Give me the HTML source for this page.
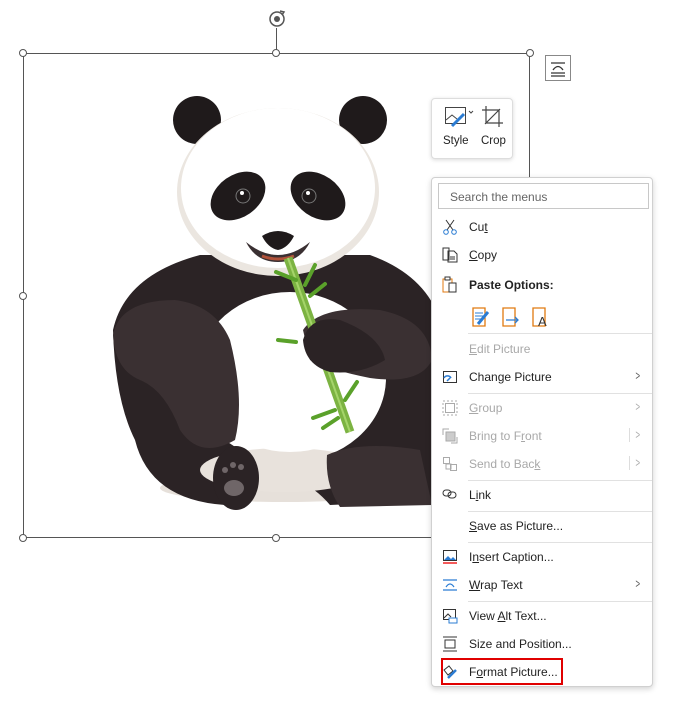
<!DOCTYPE html>
<html><head><meta charset="utf-8"><style>
body{margin:0;width:678px;height:701px;background:#fff;position:relative;overflow:hidden;font-family:"Liberation Sans",sans-serif;}
.h{position:absolute;width:8px;height:8px;border:1px solid #555;border-radius:50%;background:#fff;box-sizing:border-box}
.menu{position:absolute;left:431px;top:177px;width:222px;height:510px;background:#fff;border:1px solid #d0d0d0;border-radius:4px;box-shadow:0 2px 6px rgba(0,0,0,.18);box-sizing:border-box}
.it{position:absolute;left:37px;font-size:12px;color:#222;line-height:14px}
.dis{color:#a8a8a8}
.sep{position:absolute;left:36px;right:0;height:1px;background:#e1e1e1}
.chev{position:absolute;right:10px;font-size:13px;color:#555;transform:scaleX(.6)}
.ic{position:absolute;left:10px}
</style></head><body>
<!-- panda -->
<svg style="position:absolute;left:0;top:0" width="678" height="701" viewBox="0 0 678 701">
<ellipse cx="285" cy="488" rx="125" ry="14" fill="#e6e0da"/>
<path d="M113 330 Q125 275 200 255 L370 255 Q425 275 440 320 L440 500 L330 505 Q300 470 250 470 L225 505 Q150 500 135 440 Q115 400 113 330Z" fill="#2b2325"/>
<ellipse cx="290" cy="378" rx="96" ry="84" fill="#fff"/>
<ellipse cx="285" cy="470" rx="85" ry="22" fill="#e8e2dc"/>
<ellipse cx="290" cy="372" rx="92" ry="80" fill="#fff"/>
<path d="M113 335 Q120 300 175 300 Q215 305 230 340 Q245 400 235 440 Q200 460 180 430 Q165 390 140 380 Q115 370 113 335Z" fill="#3a3032"/>
<path d="M303 330 Q320 305 380 310 Q430 320 432 360 Q420 385 370 378 Q330 370 310 360Z" fill="#3a3032"/>
<path d="M327 455 Q360 440 420 450 L432 505 L340 507 Q325 485 327 455Z" fill="#3a3032"/>
<ellipse cx="236" cy="478" rx="23" ry="32" fill="#2b2325"/>
<ellipse cx="234" cy="488" rx="10" ry="8" fill="#6f6668"/>
<circle cx="225" cy="470" r="3" fill="#6f6668"/><circle cx="233" cy="465" r="3" fill="#6f6668"/><circle cx="241" cy="467" r="3" fill="#6f6668"/>
<circle cx="197" cy="120" r="24" fill="#1f1a1b"/><circle cx="363" cy="120" r="24" fill="#1f1a1b"/>
<ellipse cx="278" cy="192" rx="101" ry="84" fill="#ebe6e0"/>
<ellipse cx="278" cy="188" rx="97" ry="80" fill="#fff"/>
<ellipse cx="238" cy="196" rx="30" ry="21" fill="#1f1a1b" transform="rotate(-35 238 196)"/>
<ellipse cx="318" cy="196" rx="30" ry="21" fill="#1f1a1b" transform="rotate(35 318 196)"/>
<circle cx="243" cy="196" r="7" fill="none" stroke="#777" stroke-width="1"/><circle cx="242" cy="193" r="2" fill="#fff"/>
<circle cx="309" cy="196" r="7" fill="none" stroke="#777" stroke-width="1"/><circle cx="308" cy="193" r="2" fill="#fff"/>
<path d="M262 236 Q278 226 294 236 Q288 248 278 250 Q268 248 262 236Z" fill="#1f1a1b"/>
<path d="M246 242 Q278 268 310 242 Q300 262 278 262 Q256 262 246 242Z" fill="#3a3032"/>
<path d="M262 256 Q278 262 294 256" stroke="#b0523a" stroke-width="3" fill="none"/>
<path d="M288 258 L350 432" stroke="#7cb342" stroke-width="9"/>
<path d="M288 258 L350 432" stroke="#a5d46a" stroke-width="2"/>
<path d="M296 280l-20-8M305 285l10-20M310 296l15-12M296 342l-18-2M345 400l12-18M335 410l-22 8M338 418l-15 10" stroke="#5aa12a" stroke-width="4" stroke-linecap="round"/>
<path d="M303 340 Q310 315 340 320 Q380 335 385 360 Q360 375 330 372 Q305 365 303 340Z" fill="#2b2325"/>
</svg>
<!-- selection frame -->
<div style="position:absolute;left:23px;top:53px;width:507px;height:485px;border:1px solid #555;box-sizing:border-box"></div>
<div style="position:absolute;left:276px;top:28px;width:1px;height:25px;background:#555"></div>
<div class="h" style="left:19px;top:49px"></div><div class="h" style="left:272px;top:49px"></div><div class="h" style="left:526px;top:49px"></div>
<div class="h" style="left:19px;top:292px"></div>
<div class="h" style="left:19px;top:534px"></div><div class="h" style="left:272px;top:534px"></div>
<svg style="position:absolute;left:267px;top:9px" width="20" height="20" viewBox="0 0 20 20"><circle cx="10" cy="10" r="7" fill="none" stroke="#555" stroke-width="1.5"/><circle cx="10" cy="10" r="3" fill="#555"/><path d="M13 2l4 1-2 3" fill="none" stroke="#555" stroke-width="1.5"/></svg>
<svg style="position:absolute;left:545px;top:55px" width="26" height="26"><rect x=".5" y=".5" width="25" height="25" fill="#fff" stroke="#888"/><path d="M6 8h14M6 18h14M6 21h14M8 15q5-7 10 0" fill="none" stroke="#333" stroke-width="1.3"/></svg>
<!-- toolbar -->
<div style="position:absolute;left:431px;top:98px;width:82px;height:61px;border:1px solid #ddd;border-radius:4px;background:#fff;box-shadow:0 1px 4px rgba(0,0,0,.15);box-sizing:border-box">
<svg style="position:absolute;left:12px;top:7px" width="32" height="22"><rect x="1.5" y="1.5" width="20" height="16" fill="none" stroke="#444"/><path d="M2 14l6-5 5 4" fill="none" stroke="#444"/><path d="M8 20l12-12" stroke="#2b7cd3" stroke-width="3"/><path d="M25 5l2 2 2-2" fill="none" stroke="#444"/></svg>
<svg style="position:absolute;left:49px;top:6px" width="24" height="24"><path d="M5 1v17h17M1 5h17v17M4 19L19 4" fill="none" stroke="#444" stroke-width="1.2"/></svg>
<div style="position:absolute;left:11px;top:36px;font-size:11.5px;color:#222">Style</div>
<div style="position:absolute;left:49px;top:36px;font-size:11.5px;color:#222">Crop</div>
</div>
<!-- menu -->
<div class="menu">
<div style="position:absolute;left:6px;top:5px;width:211px;height:26px;border:1px solid #c8c8c8;box-sizing:border-box;font-size:12px;color:#666;padding:6px 11px">Search the menus</div>
<svg class="ic" style="top:41px" width="16" height="16"><path d="M4 1l7 10M12 1L5 11" stroke="#333" fill="none"/><circle cx="4" cy="13" r="2.3" fill="none" stroke="#2b7cd3"/><circle cx="12" cy="13" r="2.3" fill="none" stroke="#2b7cd3"/></svg>
<div class="it" style="top:42px">Cu<u>t</u></div>
<svg class="ic" style="top:69px" width="16" height="16"><path d="M1 1h6v12H1zM6 4h6l3 3v8H6z" fill="#fff" stroke="#333"/><path d="M8 10h5M8 12h5" stroke="#333"/></svg>
<div class="it" style="top:70px"><u>C</u>opy</div>
<svg class="ic" style="top:98px" width="16" height="17"><path d="M1 3h9v13H1z" fill="none" stroke="#e07a10"/><rect x="3" y="1" width="5" height="3" fill="#fff" stroke="#333"/><rect x="7" y="7" width="7" height="9" fill="#fff" stroke="#333"/></svg>
<div class="it" style="top:100px;font-weight:bold">Paste Options:</div>
<svg style="position:absolute;left:40px;top:126px" width="80" height="24"><path d="M1 4h12v18H1z" fill="none" stroke="#e07a10" stroke-width="1.3"/><path d="M3 9h8M3 12h8M3 15h6" stroke="#2b7cd3"/><path d="M6 20l10-12" stroke="#2b7cd3" stroke-width="3"/><path d="M31 4h12v18H31z" fill="none" stroke="#e07a10" stroke-width="1.3"/><path d="M34 16h12M43 13l3 3-3 3" stroke="#2b7cd3" fill="none" stroke-width="1.3"/><path d="M61 4h12v18H61z" fill="none" stroke="#e07a10" stroke-width="1.3"/><text x="66" y="22" font-size="13" fill="#333" font-family="Liberation Sans">A</text></svg>
<div class="sep" style="top:155px"></div>
<div class="it dis" style="top:164px"><u>E</u>dit Picture</div>
<svg class="ic" style="top:192px" width="16" height="14"><rect x="1.5" y="1.5" width="13" height="11" fill="none" stroke="#333"/><path d="M2 8a4 4 0 0 1 7 0M5 11l3-3" stroke="#2b7cd3" fill="none" stroke-width="1.5"/></svg>
<div class="it" style="top:192px">Chan<u>g</u>e Picture</div><div class="chev" style="top:190px">&gt;</div>
<div class="sep" style="top:215px"></div>
<svg class="ic" style="top:222px" width="16" height="16"><rect x="3.5" y="3.5" width="9" height="9" fill="none" stroke="#aaa"/><rect x="1" y="1" width="14" height="14" fill="none" stroke="#aaa" stroke-dasharray="2 2"/></svg>
<div class="it dis" style="top:223px"><u>G</u>roup</div><div class="chev" style="top:221px;color:#aaa">&gt;</div>
<svg class="ic" style="top:250px" width="16" height="16"><rect x="4" y="4" width="9" height="9" fill="#ccc" stroke="#aaa"/><path d="M1 7V1h6M15 9v6H9" fill="none" stroke="#aaa"/></svg>
<div class="it dis" style="top:251px">Bring to F<u>r</u>ont</div><div style="position:absolute;left:197px;top:250px;width:1px;height:14px;background:#ddd"></div><div class="chev" style="top:249px;color:#aaa">&gt;</div>
<svg class="ic" style="top:278px" width="16" height="16"><rect x="1.5" y="1.5" width="6" height="6" fill="none" stroke="#aaa"/><rect x="8.5" y="8.5" width="6" height="6" fill="none" stroke="#aaa"/><rect x="4" y="8" width="5" height="5" fill="none" stroke="#aaa"/></svg>
<div class="it dis" style="top:279px">Send to Bac<u>k</u></div><div style="position:absolute;left:197px;top:278px;width:1px;height:14px;background:#ddd"></div><div class="chev" style="top:277px;color:#aaa">&gt;</div>
<div class="sep" style="top:302px"></div>
<svg class="ic" style="top:310px" width="16" height="12"><rect x="1" y="2" width="8" height="6" rx="3" fill="none" stroke="#333"/><rect x="6" y="4" width="8" height="6" rx="3" fill="none" stroke="#333"/></svg>
<div class="it" style="top:310px">L<u>i</u>nk</div>
<div class="sep" style="top:333px"></div>
<div class="it" style="top:341px"><u>S</u>ave as Picture...</div>
<div class="sep" style="top:364px"></div>
<svg class="ic" style="top:371px" width="16" height="16"><rect x="1.5" y="1.5" width="13" height="10" fill="none" stroke="#333"/><path d="M2 11l4-4 3 3 2-2 3 3z" fill="#2b7cd3"/><path d="M1 14h14" stroke="#e00" stroke-width="1.3"/></svg>
<div class="it" style="top:372px">I<u>n</u>sert Caption...</div>
<svg class="ic" style="top:400px" width="16" height="14"><path d="M1 2h14M1 12h14M4 9q4-6 8 0" fill="none" stroke="#2b7cd3" stroke-width="1.2"/></svg>
<div class="it" style="top:400px"><u>W</u>rap Text</div><div class="chev" style="top:398px">&gt;</div>
<div class="sep" style="top:423px"></div>
<svg class="ic" style="top:430px" width="16" height="16"><rect x="1.5" y="1.5" width="12" height="10" fill="none" stroke="#333"/><path d="M2 10l4-4 3 3" fill="none" stroke="#333"/><rect x="7" y="10" width="8" height="5" fill="#fff" stroke="#2b7cd3"/></svg>
<div class="it" style="top:431px">View <u>A</u>lt Text...</div>
<svg class="ic" style="top:458px" width="16" height="16"><path d="M1 1h14M1 15h14M3 4h10v8H3z" fill="none" stroke="#333"/></svg>
<div class="it" style="top:459px">Size and Position...</div>
<div style="position:absolute;left:9px;top:480px;width:122px;height:27px;border:2px solid #e00000;box-sizing:border-box"></div>
<svg class="ic" style="top:486px" width="16" height="16"><path d="M2 6l5-4 4 5-5 4z" fill="none" stroke="#333"/><path d="M6 14l8-8" stroke="#2b7cd3" stroke-width="2.5"/></svg>
<div class="it" style="top:487px">F<u>o</u>rmat Picture...</div>
</div>
</body></html>
